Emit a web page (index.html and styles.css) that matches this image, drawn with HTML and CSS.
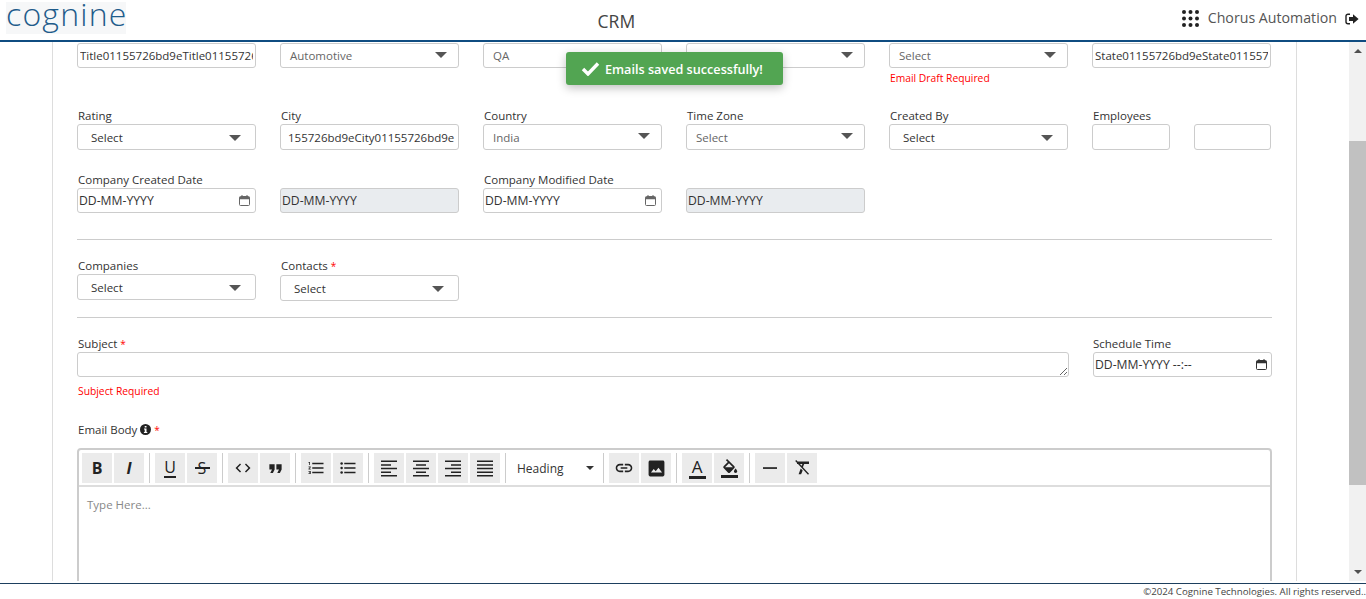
FILE: index.html
```html
<!DOCTYPE html>
<html lang="en">
<head>
    <meta charset="UTF-8">
    <title>CRM - Cognine</title>
    <link rel="stylesheet" href="styles.css">
</head>
<body>
    <header class="topbar">
        <div class="logo">cognine</div>
        <div class="app-title">CRM</div>
        <div class="user-box">
            <svg class="apps-icon" width="17" height="17" viewBox="0 0 17 17" fill="#222">
                <circle cx="2" cy="2" r="2"/><circle cx="8.5" cy="2" r="2"/><circle cx="15" cy="2" r="2"/>
                <circle cx="2" cy="8.5" r="2"/><circle cx="8.5" cy="8.5" r="2"/><circle cx="15" cy="8.5" r="2"/>
                <circle cx="2" cy="15" r="2"/><circle cx="8.5" cy="15" r="2"/><circle cx="15" cy="15" r="2"/>
            </svg>
            <span class="user-name">Chorus Automation</span>
            <svg class="logout-icon" width="14" height="12" viewBox="0 0 14 12">
                <path d="M5 1.2H3a2 2 0 0 0-2 2v5.6a2 2 0 0 0 2 2h2" fill="none" stroke="#222" stroke-width="1.4"/>
                <path d="M8 1.2 13.6 6 8 10.8V8H4V4h4z" fill="#222"/>
            </svg>
        </div>
    </header>

    <div class="toast">
        <svg width="19" height="15" viewBox="0 0 19 15"><path d="M2 8l5 5L17 2.5" fill="none" stroke="#fff" stroke-width="3.4"/></svg>
        <span>Emails saved successfully!</span>
    </div>

    <div class="page">
        <main class="content">
            <div class="card">
                <div class="form-row first-row">
                    <div><input class="input" type="text" value="Title01155726bd9eTitle01155726bd9e"></div>
                    <div><div class="select"><span class="muted">Automotive</span><i class="caret"></i></div></div>
                    <div><div class="select"><span class="muted">QA</span><i class="caret"></i></div></div>
                    <div><div class="select"><span class="muted">Email</span><i class="caret"></i></div></div>
                    <div>
                        <div class="select"><span class="muted">Select</span><i class="caret"></i></div>
                        <p class="error">Email Draft Required</p>
                    </div>
                    <div><input class="input" type="text" value="State01155726bd9eState01155726bd9e"></div>
                </div>

                <div class="form-row second-row">
                    <div><label>Rating</label><div class="select wide tall"><span>Select</span><i class="caret"></i></div></div>
                    <div><label>City</label><input class="input tall city" type="text" value="155726bd9eCity01155726bd9e"></div>
                    <div><label>Country</label><div class="select tall"><span class="muted">India</span><i class="caret"></i></div></div>
                    <div><label>Time Zone</label><div class="select tall"><span class="muted">Select</span><i class="caret"></i></div></div>
                    <div><label>Created By</label><div class="select wide tall"><span>Select</span><i class="caret"></i></div></div>
                    <div>
                        <label>Employees</label>
                        <div class="employees">
                            <input class="input tall" type="text">
                            <input class="input tall" type="text">
                        </div>
                    </div>
                </div>

                <div class="form-row third-row">
                    <div><label>Company Created Date</label><div class="date"><span>DD-MM-YYYY</span>
                        <svg class="cal" width="11" height="11" viewBox="0 0 11 11"><path d="M1.5 1.5h8a1 1 0 0 1 1 1v7a1 1 0 0 1-1 1h-8a1 1 0 0 1-1-1v-7a1 1 0 0 1 1-1z" fill="none" stroke="#666"/><path d="M.5 2h10v2.2H.5zM2.5 0h1v2h-1zM7.5 0h1v2h-1z" fill="#666"/></svg>
                    </div></div>
                    <div><label>&nbsp;</label><div class="date disabled"><span>DD-MM-YYYY</span></div></div>
                    <div><label>Company Modified Date</label><div class="date"><span>DD-MM-YYYY</span>
                        <svg class="cal" width="11" height="11" viewBox="0 0 11 11"><path d="M1.5 1.5h8a1 1 0 0 1 1 1v7a1 1 0 0 1-1 1h-8a1 1 0 0 1-1-1v-7a1 1 0 0 1 1-1z" fill="none" stroke="#666"/><path d="M.5 2h10v2.2H.5zM2.5 0h1v2h-1zM7.5 0h1v2h-1z" fill="#666"/></svg>
                    </div></div>
                    <div><label>&nbsp;</label><div class="date disabled"><span>DD-MM-YYYY</span></div></div>
                </div>

                <hr class="divider first-divider">

                <div class="form-row fourth-row">
                    <div><label>Companies</label><div class="select wide tall"><span>Select</span><i class="caret"></i></div></div>
                    <div><label>Contacts <b class="req">*</b></label><div class="select wide tall push"><span>Select</span><i class="caret"></i></div></div>
                </div>

                <hr class="divider second-divider">

                <div class="form-row fifth-row">
                    <div class="span-five">
                        <label>Subject <b class="req">*</b></label>
                        <textarea class="subject"></textarea>
                        <p class="error subject-error">Subject Required</p>
                    </div>
                    <div>
                        <label>Schedule Time</label>
                        <div class="date schedule"><span>DD-MM-YYYY --:--</span>
                            <svg class="cal" width="11" height="11" viewBox="0 0 11 11"><path d="M1.5 1.5h8a1 1 0 0 1 1 1v7a1 1 0 0 1-1 1h-8a1 1 0 0 1-1-1v-7a1 1 0 0 1 1-1z" fill="none" stroke="#333"/><path d="M.5 2h10v2.2H.5zM2.5 0h1v2h-1zM7.5 0h1v2h-1z" fill="#333"/></svg>
                        </div>
                    </div>
                </div>

                <label class="body-label">Email Body
                    <svg width="11" height="11" viewBox="0 0 11 11"><circle cx="5.5" cy="5.5" r="5.5" fill="#222"/><path d="M4.7 2h1.8v1.6H4.7zM4 4.5h2.5v3.4h.8v1.1H3.9V7.9h.8V5.6H4z" fill="#fff"/></svg>
                    <b class="req">*</b>
                </label>

                <div class="editor">
                    <div class="toolbar">
                        <button class="tool tool-b">B</button>
                        <button class="tool tool-i">I</button>
                        <span class="sep"></span>
                        <button class="tool tool-u">U</button>
                        <button class="tool tool-s">S</button>
                        <span class="sep"></span>
                        <button class="tool"><svg width="18" height="18" viewBox="0 0 24 24"><path d="M9.4 16.6 4.8 12l4.6-4.6L8 6l-6 6 6 6 1.4-1.4zm5.2 0 4.6-4.6-4.6-4.6L16 6l6 6-6 6-1.4-1.4z"/></svg></button>
                        <button class="tool"><svg width="21" height="21" viewBox="0 0 24 24"><path d="M6 17h3l2-4V7H5v6h3zm8 0h3l2-4V7h-6v6h3z"/></svg></button>
                        <span class="sep"></span>
                        <button class="tool"><svg width="18" height="18" viewBox="0 0 24 24"><path d="M2 17h2v.5H3v1h1v.5H2v1h3v-4H2v1zm1-9h1V4H2v1h1v3zm-1 3h1.8L2 13.1v.9h3v-1H3.2L5 10.9V10H2v1zm5-6v2h15V5H7zm0 14h15v-2H7v2zm0-6h15v-2H7v2z"/></svg></button>
                        <button class="tool"><svg width="18" height="18" viewBox="0 0 24 24"><circle cx="3.5" cy="6" r="1.7"/><circle cx="3.5" cy="12" r="1.7"/><circle cx="3.5" cy="18" r="1.7"/><path d="M7 5h15v2H7zM7 11h15v2H7zM7 17h15v2H7z"/></svg></button>
                        <span class="sep"></span>
                        <button class="tool"><svg width="18" height="18" viewBox="0 0 18 18"><path d="M1 1.5h16V3H1zM1 5.2h10v1.5H1zM1 8.8h16v1.5H1zM1 12.4h10v1.5H1zM1 16h16v1.5H1z"/></svg></button>
                        <button class="tool"><svg width="18" height="18" viewBox="0 0 18 18"><path d="M1 1.5h16V3H1zM4 5.2h10v1.5H4zM1 8.8h16v1.5H1zM4 12.4h10v1.5H4zM1 16h16v1.5H1z"/></svg></button>
                        <button class="tool"><svg width="18" height="18" viewBox="0 0 18 18"><path d="M1 1.5h16V3H1zM7 5.2h10v1.5H7zM1 8.8h16v1.5H1zM7 12.4h10v1.5H7zM1 16h16v1.5H1z"/></svg></button>
                        <button class="tool"><svg width="18" height="18" viewBox="0 0 18 18"><path d="M1 1.5h16V3H1zM1 5.2h16v1.5H1zM1 8.8h16v1.5H1zM1 12.4h16v1.5H1zM1 16h16v1.5H1z"/></svg></button>
                        <span class="sep"></span>
                        <div class="heading-select"><span>Heading</span><i class="caret small"></i></div>
                        <span class="sep"></span>
                        <button class="tool"><svg width="20" height="20" viewBox="0 0 24 24"><path d="M3.9 12c0-1.71 1.39-3.1 3.1-3.1h4V7H7c-2.76 0-5 2.24-5 5s2.24 5 5 5h4v-1.9H7c-1.71 0-3.1-1.39-3.1-3.1zM8 13h8v-2H8v2zm9-6h-4v1.9h4c1.71 0 3.1 1.39 3.1 3.1s-1.39 3.1-3.1 3.1h-4V17h4c2.76 0 5-2.24 5-5s-2.24-5-5-5z"/></svg></button>
                        <button class="tool"><svg width="19" height="19" viewBox="0 0 24 24"><path d="M22 20V4c0-1.1-.9-2-2-2H4c-1.1 0-2 .9-2 2v16c0 1.1.9 2 2 2h16c1.1 0 2-.9 2-2zM8.5 12.5l2.5 3 3.5-4.5 4.5 6H5l3.5-4.5z"/></svg></button>
                        <span class="sep"></span>
                        <button class="tool tool-a">A</button>
                        <button class="tool tool-fill"><svg width="18" height="14" viewBox="0 0 20 17"><path d="M16.56 8.94 7.62 0 6.21 1.41l2.38 2.38-5.15 5.15c-.59.59-.59 1.54 0 2.12l5.5 5.5c.29.29.68.44 1.06.44s.77-.15 1.06-.44l5.5-5.5c.59-.58.59-1.53 0-2.12zM5.21 10 10 5.21 14.79 10H5.21zM18 11.5s-2 2.17-2 3.5c0 1.1.9 2 2 2s2-.9 2-2c0-1.33-2-3.5-2-3.5z"/></svg></button>
                        <span class="sep"></span>
                        <button class="tool"><svg width="18" height="18" viewBox="0 0 18 18"><path d="M2 8.2h14v1.7H2z"/></svg></button>
                        <button class="tool"><svg width="20" height="20" viewBox="0 0 20 20"><path d="M5 3.5h12V6h-4.8l-1.3 3.2L9.6 8 10.4 6H5zM3.2 3l1-1L17 15.8l-1 1zM8.7 10.4l2 2-1.6 3.9H6.6z"/></svg></button>
                    </div>
                    <div class="editor-body">Type Here...</div>
                </div>
            </div>
        </main>

        <aside class="scrollbar">
            <i class="arrow-up"></i>
            <div class="track"><div class="thumb"></div></div>
            <i class="arrow-down"></i>
        </aside>
    </div>

    <footer class="bottombar">©2024 Cognine Technologies. All rights reserved..</footer>
</body>
</html>
```

FILE: styles.css
```css
* {
    box-sizing: border-box;
}
html, body {
    height: 100%;
}
body {
    font-family: 'Open Sans', 'Noto Sans', sans-serif;
    font-size: 11.5px;
    color: #333;
    background: white;
    margin: 0;
    display: flex;
    flex-direction: column;
    overflow: hidden;
}

/* header */
.topbar {
    height: 42px;
    flex: none;
    display: flex;
    align-items: flex-start;
    padding-left: 6px;
    border-bottom: 2px solid #0f4c81;
}
.logo {
    width: 120px;
    height: 32px;
    margin-top: 2px;
    background: #f6f7f8;
    color: #1f5c8b;
    font-family: 'Open Sans', sans-serif;
    font-weight: 300;
    font-size: 32px;
    line-height: 23px;
    letter-spacing: 1.2px;
    text-align: center;
}
.app-title {
    flex: 1;
    padding-right: 75px;
    padding-top: 9px;
    text-align: center;
    font-size: 17.5px;
    line-height: 24px;
    color: #444;
}
.user-box {
    display: flex;
    align-items: center;
    padding: 8px 7px 0 0;
}
.user-name {
    margin: 0 8px 0 9px;
    font-size: 14.2px;
    line-height: 16px;
    color: #555;
}
.apps-icon {
    margin-top: 2px;
}
.logout-icon {
    margin-top: 2px;
}

/* toast */
.toast {
    position: absolute;
    z-index: 10;
    left: 566px;
    top: 52px;
    width: 217px;
    height: 33px;
    background: #52a552;
    color: white;
    border-radius: 3px;
    box-shadow: 0 3px 10px rgba(0, 0, 0, 0.25);
    display: flex;
    align-items: center;
    padding-left: 15px;
    gap: 5px;
    font-size: 12.65px;
    font-weight: 600;
}

/* page */
.page {
    height: 539px;
    flex: none;
    display: flex;
    overflow: hidden;
}
.content {
    flex: 1;
    padding: 0 52px;
    overflow: hidden;
}
.card {
    height: 100%;
    padding: 1px 24px 0;
    border-left: 1px solid #ddd;
    border-right: 1px solid #ddd;
}
.form-row {
    display: grid;
    grid-template-columns: repeat(6, 179px);
    column-gap: 24px;
}
.second-row {
    margin-top: 23px;
}
.third-row {
    margin-top: 22px;
}
.fourth-row {
    margin-top: 18px;
}
.fifth-row {
    margin-top: 18px;
}
.span-five {
    grid-column: span 5;
}
.first-row {
    height: 42px;
}
label {
    display: block;
    height: 16px;
    padding-left: 1px;
    line-height: 16px;
    color: #333;
}
.req {
    color: red;
    font-weight: normal;
    font-size: 10px;
}
.divider {
    border: none;
    border-top: 1px solid #ccc;
    margin: 0;
}
.first-divider {
    margin-top: 26px;
}
.second-divider {
    margin-top: 16px;
}

/* controls */
.input,
.select,
.date {
    display: block;
    width: 100%;
    height: 25px;
    border: 1px solid #ccc;
    border-radius: 3px;
    background: white;
    font-family: inherit;
    font-size: 11.5px;
    color: #333;
}
.input {
    padding: 0 2px;
    outline: none;
}
.input.city {
    padding-left: 7px;
}
.tall {
    height: 26px;
}
.select {
    position: relative;
    display: flex;
    align-items: center;
    padding-left: 9px;
}
.select.wide {
    padding-left: 13px;
}
.muted {
    color: #666;
}
.caret {
    position: absolute;
    right: 11px;
    top: 8px;
    width: 0;
    height: 0;
    border-left: 6px solid transparent;
    border-right: 6px solid transparent;
    border-top: 6px solid #555;
}
.select.wide .caret {
    right: 14px;
    top: 10px;
}
.push {
    margin-top: 1px;
}
.employees {
    display: flex;
    justify-content: space-between;
}
.employees .input {
    width: 78px;
}
.employees .input:last-child {
    width: 77px;
}
.date {
    display: flex;
    align-items: center;
    justify-content: space-between;
    padding: 0 4px 0 1px;
    font-size: 12.2px;
}
.date .cal {
    margin-right: 1px;
}
.date.disabled {
    background: #e9ecef;
}
.schedule {
    width: 179px;
    margin-left: 1px;
}
.schedule .cal {
    margin-right: 0;
}
.error {
    margin: 3px 0 0;
    padding-left: 1px;
    font-size: 10.3px;
    line-height: 14px;
    color: red;
}
.subject {
    display: block;
    width: calc(100% + 1px);
    height: 25px;
    border: 1px solid #ccc;
    border-radius: 3px;
    outline: none;
    resize: vertical;
    font-family: inherit;
}
.subject-error {
    margin-top: 7px;
}
.body-label {
    margin-top: 24px;
}
.body-label svg {
    vertical-align: -1px;
}

/* editor */
.editor {
    height: 300px;
    margin-top: 10px;
    border: 2px solid #ccc;
    border-radius: 4px;
}
.toolbar {
    height: 37px;
    display: flex;
    align-items: flex-start;
    gap: 2px;
    padding: 3px 0 0 3px;
    border-bottom: 2px solid #ddd;
}
.tool {
    position: relative;
    width: 30px;
    height: 30px;
    flex: none;
    display: flex;
    align-items: center;
    justify-content: center;
    padding: 0;
    border: none;
    background: #ebebeb;
    color: #222;
    font-family: 'Open Sans', sans-serif;
    font-size: 16px;
    font-weight: 700;
}
.tool svg {
    fill: #222;
}
.tool-i {
    font-style: italic;
    font-size: 16px;
}
.tool-u {
    flex-direction: column;
    font-weight: 400;
    font-size: 16px;
    line-height: 17px;
}
.tool-u::after {
    content: "";
    width: 12px;
    height: 2px;
    background: #222;
}
.tool-s {
    font-weight: 400;
    font-size: 16px;
}
.tool-s::after {
    content: "";
    position: absolute;
    left: 8px;
    top: 14px;
    width: 15px;
    height: 2px;
    background: #222;
}
.tool-a {
    flex-direction: column;
    font-weight: 400;
    font-size: 17px;
    line-height: 19px;
}
.tool-a::after {
    content: "";
    width: 17px;
    height: 3px;
    background: #222;
}
.tool-fill {
    flex-direction: column;
}
.tool-fill::after {
    content: "";
    width: 17px;
    height: 3px;
    margin-top: 2px;
    background: #222;
}
.sep {
    width: 1px;
    height: 30px;
    flex: none;
    margin: 0 3px 0 3px;
    background: #ccc;
}
.heading-select {
    position: relative;
    width: 87px;
    height: 30px;
    flex: none;
    padding-left: 6px;
    line-height: 31px;
    font-size: 12px;
    color: #333;
}
.caret.small {
    right: 4px;
    top: 13px;
    border-left-width: 4px;
    border-right-width: 4px;
    border-top: 4px solid #333;
}
.editor-body {
    padding: 10px 8px;
    color: #888;
    font-size: 11.5px;
    line-height: 16px;
}

/* scrollbar */
.scrollbar {
    width: 17px;
    flex: none;
    display: flex;
    flex-direction: column;
    align-items: center;
    background: #f1f1f1;
}
.track {
    flex: 1;
    width: 100%;
    padding-top: 82px;
}
.thumb {
    height: 344px;
    background: #c1c1c1;
}
.arrow-up,
.arrow-down {
    flex: none;
    width: 0;
    height: 0;
    border-left: 4px solid transparent;
    border-right: 4px solid transparent;
}
.arrow-up {
    margin: 7px 0 6px;
    border-bottom: 4px solid #505050;
}
.arrow-down {
    margin: 6px 0 7px;
    border-top: 4px solid #505050;
}

/* footer */
.bottombar {
    margin-top: 2px;
    height: 16px;
    flex: none;
    border-top: 1px solid #1d3f5e;
    text-align: right;
    font-size: 9.7px;
    line-height: 15px;
    color: #444;
    white-space: nowrap;
}
```
